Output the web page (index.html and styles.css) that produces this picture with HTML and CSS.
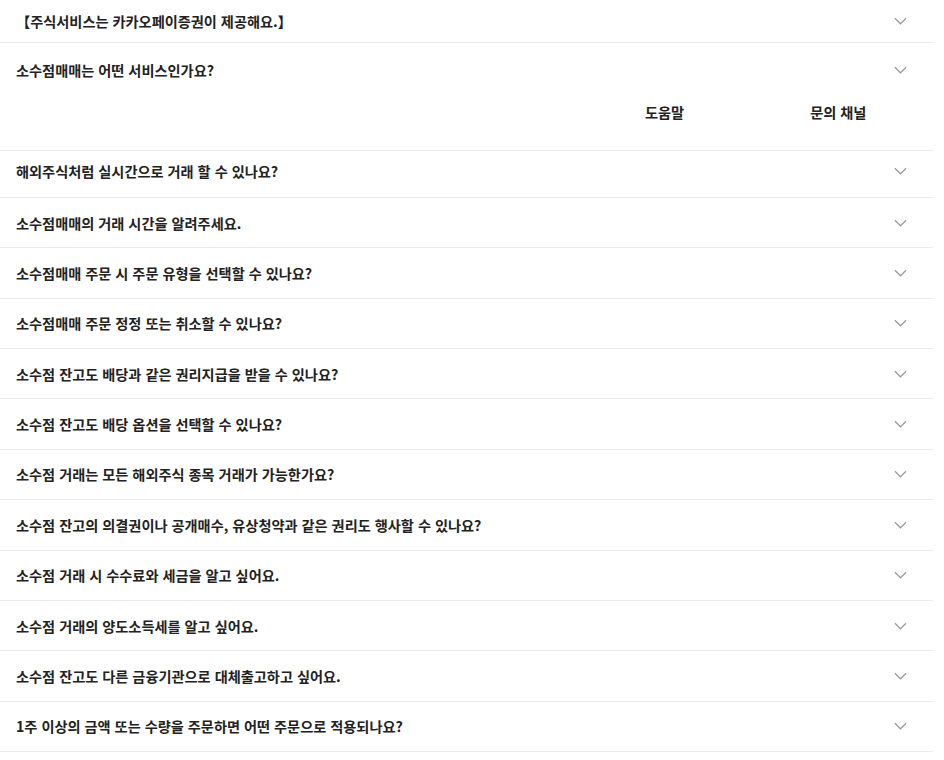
FILE: index.html
```html
<!DOCTYPE html>
<html lang="ko">
<head>
<meta charset="utf-8">
<link rel="stylesheet" href="styles.css">
</head>
<body>
<ul class="faq">
  <li class="item first"><div class="head"><span class="q">【주식서비스는 카카오페이증권이 제공해요.】</span><svg class="chev" viewBox="0 0 14 8"><path d="M1 1l6 6 6-6"/></svg></div></li>
  <li class="item open"><div class="head"><span class="q">소수점매매는 어떤 서비스인가요?</span><svg class="chev" viewBox="0 0 14 8"><path d="M1 1l6 6 6-6"/></svg></div>
    <div class="body"><span class="tab">도움말</span><span class="tab">문의 채널</span></div></li>
  <li class="item after-open"><div class="head"><span class="q">해외주식처럼 실시간으로 거래 할 수 있나요?</span><svg class="chev" viewBox="0 0 14 8"><path d="M1 1l6 6 6-6"/></svg></div></li>
  <li class="item"><div class="head"><span class="q">소수점매매의 거래 시간을 알려주세요.</span><svg class="chev" viewBox="0 0 14 8"><path d="M1 1l6 6 6-6"/></svg></div></li>
  <li class="item"><div class="head"><span class="q">소수점매매 주문 시 주문 유형을 선택할 수 있나요?</span><svg class="chev" viewBox="0 0 14 8"><path d="M1 1l6 6 6-6"/></svg></div></li>
  <li class="item"><div class="head"><span class="q">소수점매매 주문 정정 또는 취소할 수 있나요?</span><svg class="chev" viewBox="0 0 14 8"><path d="M1 1l6 6 6-6"/></svg></div></li>
  <li class="item"><div class="head"><span class="q">소수점 잔고도 배당과 같은 권리지급을 받을 수 있나요?</span><svg class="chev" viewBox="0 0 14 8"><path d="M1 1l6 6 6-6"/></svg></div></li>
  <li class="item"><div class="head"><span class="q">소수점 잔고도 배당 옵션을 선택할 수 있나요?</span><svg class="chev" viewBox="0 0 14 8"><path d="M1 1l6 6 6-6"/></svg></div></li>
  <li class="item"><div class="head"><span class="q">소수점 거래는 모든 해외주식 종목 거래가 가능한가요?</span><svg class="chev" viewBox="0 0 14 8"><path d="M1 1l6 6 6-6"/></svg></div></li>
  <li class="item"><div class="head"><span class="q">소수점 잔고의 의결권이나 공개매수, 유상청약과 같은 권리도 행사할 수 있나요?</span><svg class="chev" viewBox="0 0 14 8"><path d="M1 1l6 6 6-6"/></svg></div></li>
  <li class="item"><div class="head"><span class="q">소수점 거래 시 수수료와 세금을 알고 싶어요.</span><svg class="chev" viewBox="0 0 14 8"><path d="M1 1l6 6 6-6"/></svg></div></li>
  <li class="item"><div class="head"><span class="q">소수점 거래의 양도소득세를 알고 싶어요.</span><svg class="chev" viewBox="0 0 14 8"><path d="M1 1l6 6 6-6"/></svg></div></li>
  <li class="item"><div class="head"><span class="q">소수점 잔고도 다른 금융기관으로 대체출고하고 싶어요.</span><svg class="chev" viewBox="0 0 14 8"><path d="M1 1l6 6 6-6"/></svg></div></li>
  <li class="item"><div class="head"><span class="q">1주 이상의 금액 또는 수량을 주문하면 어떤 주문으로 적용되나요?</span><svg class="chev" viewBox="0 0 14 8"><path d="M1 1l6 6 6-6"/></svg></div></li>
</ul>
</body>
</html>
```
FILE: styles.css
```css
html, body {
  margin: 0;
  padding: 0;
  background: #fff;
}
body {
  font-family: "Noto Sans CJK KR", "Noto Sans", sans-serif;
  color: #222;
  overflow: hidden;
}
.faq {
  list-style: none;
  margin: 0;
  padding: 0;
  width: 933px;
}
.item {
  border-bottom: 1px solid #ebebeb;
}
.head {
  height: 49.36px;
  box-sizing: border-box;
  display: flex;
  align-items: center;
  justify-content: space-between;
  padding: 0 26px 0 16px;
}
.first .head {
  height: 42px;
}
.open .head {
  height: 54px;
}
.after-open .head {
  height: 46px;
  padding-bottom: 7px;
}
.q {
  font-size: 14.2px;
  font-weight: 600;
}
.chev {
  width: 13px;
  height: 8px;
  fill: none;
  stroke: #999;
  stroke-width: 1.3;
}
.body {
  height: 53px;
  box-sizing: border-box;
  display: flex;
  align-items: flex-start;
  padding: 5px 0 0 645px;
  gap: 126px;
}
.tab {
  font-size: 14.2px;
  font-weight: 600;
  line-height: 20px;
}
```
